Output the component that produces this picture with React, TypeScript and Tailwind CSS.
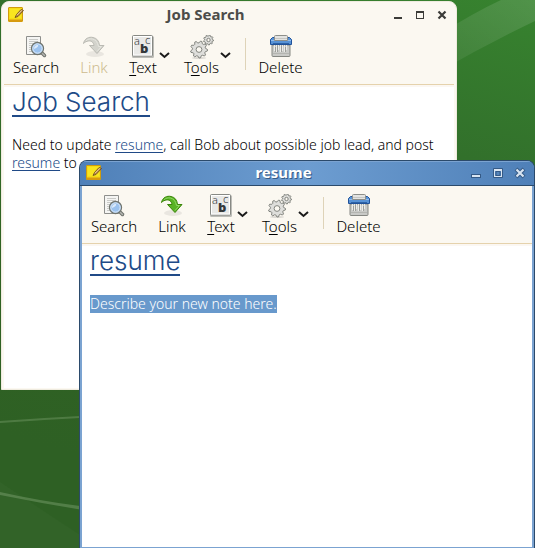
import React from 'react';

type WindowProps = { title: string; active?: boolean; children: React.ReactNode };

function Wallpaper() {
  return (
    <svg className="absolute inset-0 h-full w-full" viewBox="0 0 535 548" preserveAspectRatio="none" aria-hidden="true">
      <defs>
        <linearGradient id="leaf" x1="1" y1="0" x2="0.7" y2="1">
          <stop offset="0" stopColor="#37832f" />
          <stop offset="0.3" stopColor="#32702b" />
          <stop offset="0.7" stopColor="#306323" />
          <stop offset="1" stopColor="#2e6024" />
        </linearGradient>
        <linearGradient id="ray" x1="0" y1="1" x2="1" y2="0">
          <stop offset="0" stopColor="#fff" stopOpacity="0.05" />
          <stop offset="1" stopColor="#fff" stopOpacity="0.13" />
        </linearGradient>
      </defs>
      <rect width="535" height="548" fill="url(#leaf)" />
      <path d="M440 34Q475 12 501 0H535V21Q485 45 440 71Z" fill="url(#ray)" />
      <path d="M0 421Q40 418 80 416V418Q40 420 0 423Z" fill="#5b8650" opacity="0.7" />
      <path d="M0 492Q40 501 80 506V509.500Q40 503 0 495Z" fill="#5b8650" opacity="0.8" />
      <path d="M0 482L80 535V548H0Z" fill="#fff" opacity="0.02" />
    </svg>
  );
}

function NoteIcon() {
  return (
    <svg width="16" height="16" viewBox="0 0 16 16" aria-hidden="true">
      <rect x="0.500" y="0.500" width="14" height="14" rx="0.500" fill="#f5dc16" stroke="#d09c0c" />
      <path d="M1 12.500h13v2H1z" fill="#d99a10" />
      <path d="M2 2h11v9H2z" fill="#f9e51f" />
      <path d="M7 10.500l1.500-3 4.500-5 2.500 1-5.500 6z" fill="#b98846" stroke="#5d3f18" strokeWidth="0.700" />
      <path d="M9 8.200L14 3.200" stroke="#f0d2a0" strokeWidth="1" />
    </svg>
  );
}

function SearchIcon() {
  return (
    <svg width="24" height="24" viewBox="0 0 24 24" aria-hidden="true">
      <path d="M2.500 1.500h14v18h-14z" fill="#f5f5f3" stroke="#8e8f8c" />
      <path d="M5 4.500h9M5 6.500h9M5 8.500h5M5 10.500h4M5 12.500h4M5 14.500h4M5 16.500h6" stroke="#c9cac7" />
      <path d="M17.500 17.500l3 3" stroke="#6d706b" strokeWidth="3.500" strokeLinecap="round" />
      <path d="M17.500 17.500l3 3" stroke="#b5b7b2" strokeWidth="1.500" strokeLinecap="round" />
      <circle cx="13.500" cy="13.500" r="6" fill="#8fb8e8" stroke="#71756e" strokeWidth="1.300" />
      <circle cx="13.500" cy="13.500" r="4.700" fill="#9bc2ee" stroke="#e0ecf8" />
      <path d="M10 14a3.500 3.500 0 0 1 4-4q1 2-4 4z" fill="#dbeafa" />
    </svg>
  );
}

function LinkIcon({ faded }: { faded?: boolean }) {
  return (
    <svg width="24" height="24" viewBox="0 0 24 24" aria-hidden="true">
      <ellipse cx="13" cy="19" rx="9" ry="3" fill="#000" opacity="0.07" />
      <path
        d="M1.500 8.500C2.500 3.500 7 1.500 11 2.500c4 .8 6 3.500 6.500 8H22L15 18.500 7.500 10.500H12C11.500 7 9 5.500 6.500 6 4.500 6.200 3 7 1.500 8.500Z"
        fill={faded ? '#d3d3cc' : '#58b324'}
        stroke={faded ? '#babab3' : '#3a8508'}
        strokeLinejoin="round"
      />
      <path d="M4 5.700C7 2.700 15 2.500 16.500 11.500H19.500L15 16.500" fill="none" stroke={faded ? '#e6e6df' : '#93d967'} />
    </svg>
  );
}

function TextIcon() {
  return (
    <svg width="24" height="24" viewBox="0 0 24 24" aria-hidden="true">
      <rect x="1" y="1" width="22" height="22" rx="1.500" fill="#bdbdb8" />
      <rect x="1.500" y="0.500" width="20" height="20.500" rx="1" fill="#e9e9e7" stroke="#878984" />
      <rect x="2.500" y="1.500" width="18" height="18.500" fill="none" stroke="#fff" />
      <g fill="#34383b">
        <text x="3" y="10" fontSize="11">a</text>
        <text x="14" y="9" fontSize="11">c</text>
        <text x="9" y="18" fontSize="13" fontWeight="900">b</text>
      </g>
    </svg>
  );
}

function Gear({ cx, cy, r, teeth }: { cx: number; cy: number; r: number; teeth: number }) {
  const points = Array.from({ length: teeth * 4 }, (_, i) => {
    const a = (i / (teeth * 4)) * Math.PI * 2;
    const q = i % 4 < 2 ? r : r * 0.78;
    return `${cx + Math.cos(a) * q},${cy + Math.sin(a) * q}`;
  }).join(' ');
  return (
    <g stroke="#777974" strokeWidth="0.900" strokeLinejoin="round">
      <polygon points={points} fill="#dededb" />
      <circle cx={cx} cy={cy} r={r * 0.34} fill="#fbf8f1" />
    </g>
  );
}

function ToolsIcon() {
  return (
    <svg width="24" height="24" viewBox="0 0 24 24" aria-hidden="true">
      <ellipse cx="9" cy="23" rx="7" ry="1" fill="#000" opacity="0.12" />
      <Gear cx={9} cy={14.5} r={8.5} teeth={9} />
      <Gear cx={18.5} cy={5} r={5} teeth={9} />
    </svg>
  );
}

function DeleteIcon() {
  return (
    <svg width="24" height="24" viewBox="0 0 24 24" aria-hidden="true">
      <path d="M3 10h18v10.500q0 1-1 1H4q-1 0-1-1z" fill="#c9cac7" stroke="#858782" />
      <path d="M5.500 10v6M7.500 10v7M9.500 10v5M11.500 10v7M13.500 10v6M15.500 10v7M17.500 10v5" stroke="#ecece9" />
      <path d="M6.500 12v5M8.500 11v6M12.500 11v6M16.500 12v5" stroke="#91938e" strokeWidth="0.800" />
      <path d="M4 18.500h16" stroke="#b4b5b1" />
      <path d="M1.500 4.500l2-2h17l2 2v5h-21z" fill="#5792d6" stroke="#20529a" />
      <path d="M2 5.500h20" stroke="#92bdec" />
      <path d="M5.500 1.500q0-1 1-1h11q1 0 1 1v4h-13z" fill="#e4e4e1" stroke="#8d8f8a" />
      <path d="M6 3.500h12" stroke="#c6c7c4" />
      <path d="M4 8.500h16" stroke="#2d62a6" />
    </svg>
  );
}

function Chevron({ label }: { label: string }) {
  return (
    <button type="button" aria-label={label} className="flex h-10 w-3 items-center justify-center">
      <svg width="11" height="7" viewBox="0 0 11 7" aria-hidden="true">
        <path d="M1 1l4.500 4L10 1" fill="none" stroke="#1b1b1b" strokeWidth="2" />
      </svg>
    </button>
  );
}

const tool = 'flex flex-col items-center text-[15px] leading-4 font-light whitespace-nowrap';

function Toolbar({ linkable }: { linkable?: boolean }) {
  return (
    <div role="toolbar" className="flex h-[58px] items-start gap-5 border-b border-[#e5d2ac] bg-[#fbf8f1] px-2 pt-2">
      <button type="button" className={`${tool} w-12`}>
        <SearchIcon />
        Search
      </button>
      <button type="button" disabled={!linkable} className={`${tool} w-7 disabled:text-[#cdbb8e]`}>
        <LinkIcon faded={!linkable} />
        Link
      </button>
      <div className="flex items-start gap-[14px]">
        <div className="flex">
          <button type="button" className={`${tool} w-[30px]`}>
            <TextIcon />
            <span><span className="underline underline-offset-2">T</span>ext</span>
          </button>
          <Chevron label="Text options" />
        </div>
        <div className="flex">
          <button type="button" className={`${tool} w-[35px]`}>
            <ToolsIcon />
            <span>T<span className="underline underline-offset-2">o</span>ols</span>
          </button>
          <Chevron label="Tools options" />
        </div>
        <div className="mt-[3px] h-8 w-px bg-[#ded3b8]" />
        <button type="button" className={`${tool} w-[41px]`}>
          <DeleteIcon />
          Delete
        </button>
      </div>
    </div>
  );
}

function WindowControls({ active }: { active?: boolean }) {
  const color = active ? '#d9e5f2' : '#3b3b38';
  const edge = active ? '#355a86' : 'none';
  const cell = 'flex h-5 w-[22px] items-center justify-center';
  return (
    <div className="flex">
      <button type="button" aria-label="Minimize" className={cell}>
        <svg width="12" height="12" viewBox="0 0 12 12" aria-hidden="true">
          {active && <path d="M1 7h10v4H1z" fill={edge} />}
          <path d="M2 8h8v2H2z" fill={color} />
        </svg>
      </button>
      <button type="button" aria-label="Maximize" className={cell}>
        <svg width="12" height="12" viewBox="0 0 12 12" aria-hidden="true">
          {active && <path d="M1.500 1.500h9v9h-9zM4 4.500h4v4H4z" fill="none" stroke={edge} />}
          <path d="M2 2h8v8H2zM3 4v5h6V4z" fillRule="evenodd" fill={color} />
        </svg>
      </button>
      <button type="button" aria-label="Close" className={cell}>
        <svg width="12" height="12" viewBox="0 0 12 12" aria-hidden="true">
          {active && <path d="M2 2l8 8M10 2l-8 8" stroke={edge} strokeWidth="4" />}
          <path d="M2.500 2.500l7 7M9.500 2.500l-7 7" stroke={color} strokeWidth="2.200" />
        </svg>
      </button>
    </div>
  );
}

function NoteWindow({ title, active, children }: WindowProps) {
  const frame = active
    ? 'border-[#2b4a6b] border-b-0 bg-[#7ba3d1]'
    : 'border-[#efebdf] bg-[#fbf8f1]';
  const bar = active
    ? 'border-b border-[#2b4a6b] bg-linear-to-r from-[#4f80b8] via-[#6d9dd1] to-[#4f80b8] text-white shadow-[inset_0_1px_0_#7ba3d1] [text-shadow:1px_1px_0_#355a86]'
    : 'text-[#4c4c49]';
  return (
    <section className={`flex h-full flex-col overflow-hidden rounded-t-lg border ${frame}`}>
      <header className={`flex h-[25px] shrink-0 items-center pr-[3px] pl-[6px] ${bar}`}>
        <NoteIcon />
        <h2 className="flex-1 pb-[2px] text-center text-[15px] leading-5 font-bold">{title}</h2>
        <WindowControls active={active} />
      </header>
      <div className="mx-[2px] mb-px flex flex-1 flex-col bg-white">
        <Toolbar linkable={active} />
        <div className="h-[2px] bg-[#fbf7f2]" />
        <div className="px-2">{children}</div>
      </div>
    </section>
  );
}

const heading =
  "w-fit border-b-2 border-[#204a87] pt-[2px] font-['Inter','Noto_Sans',sans-serif] text-[26px] leading-[26px] font-light text-[#204a87]";
const body = 'mt-[19px] text-[14px] leading-[18px] font-light';
const link = 'text-[#204a87] underline underline-offset-2';

export default function App() {
  return (
    <main className="relative h-screen overflow-hidden bg-[#2f6324] font-['Noto_Sans','Open_Sans',sans-serif] text-black">
      <Wallpaper />
      <div className="absolute top-px left-px h-[389px] w-[456px]">
        <NoteWindow title="Job Search">
          <h1 className={heading}>Job Search</h1>
          <p className={body}>
            Need to update <a href="#resume" className={link}>resume</a>, call Bob about possible job lead, and post{' '}
            <a href="#resume" className={link}>resume</a> to
          </p>
        </NoteWindow>
      </div>
      <div className="absolute top-40 right-0 bottom-0 left-[79px]">
        <NoteWindow title="resume" active>
          <h1 className={heading}>resume</h1>
          <p className={body}>
            <mark className="inline-block bg-[#6899cc] text-white">Describe your new note here.</mark>
          </p>
        </NoteWindow>
      </div>
    </main>
  );
}
